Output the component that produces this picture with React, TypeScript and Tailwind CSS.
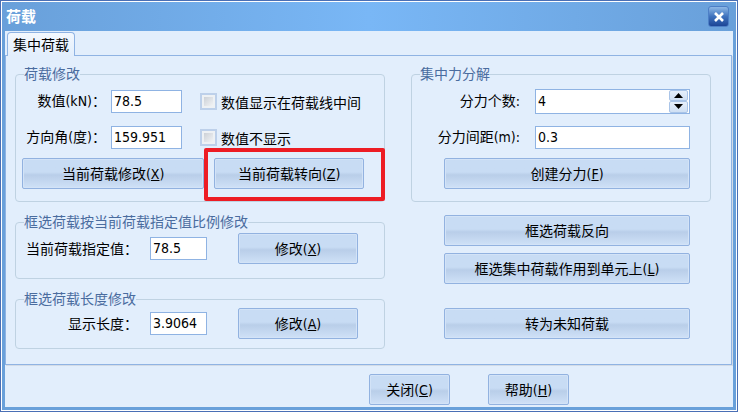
import { useState } from "react";
import type { ButtonHTMLAttributes, InputHTMLAttributes, ReactNode } from "react";
import { clsx } from "clsx";

export default function App() {
  return (
    <div className="min-h-screen bg-[#4a6fb5] p-px font-['DejaVu_Sans_Condensed','Noto_Sans_CJK_SC',sans-serif] text-sm leading-[18px] text-black">
      <div className="bg-white p-px">
        <div role="dialog" aria-labelledby="dialog-title" className="bg-[#69a0da] px-[3px] pb-[3px]">
          <TitleBar />
          <div className="bg-[#e2eefc]">
            <Tabs />
            <main className="mr-px flex gap-[26px] border border-[#8fb3e3] pt-[9px] pr-5 pb-[15px] pl-[9px] shadow-[1px_1px_0_#d3dbe6]">
              <div className="flex min-w-0 flex-[370] flex-col gap-[11px]">
                <LoadGroup />
                <ScaleGroup />
                <LengthGroup />
              </div>
              <div className="flex min-w-0 flex-[300] flex-col">
                <SplitGroup />
                <div className="mt-[13px] flex flex-col pr-[21px] pl-[33px]">
                  <Button>框选荷载反向</Button>
                  <Button className="mt-[7px]">框选集中荷载作用到单元上(<u>L</u>)</Button>
                  <Button className="mt-6">转为未知荷载</Button>
                </div>
              </div>
            </main>
            <footer className="flex justify-end gap-[38px] pt-[9px] pr-[164px] pb-[2px]">
              <Button className="w-[81px]">关闭(<u>C</u>)</Button>
              <Button className="w-[81px]">帮助(<u>H</u>)</Button>
            </footer>
          </div>
        </div>
      </div>
    </div>
  );
}

function TitleBar() {
  return (
    <header className="flex h-[29px] items-center justify-between bg-linear-to-r from-[#69a0da] via-[#79b7f6] to-[#69a0da] pr-1 pl-px">
      <h1 id="dialog-title" className="text-[15px] font-bold text-white">荷载</h1>
      <button
        type="button"
        aria-label="关闭窗口"
        className="flex size-[21px] items-center justify-center rounded-[3px] border border-[#4d7fc6] bg-linear-to-b from-[#8db8e6] via-[#3f72bd] to-[#1c4596]"
      >
        <svg viewBox="0 0 10 10" className="size-[10px]" fill="none" stroke="#fff" strokeWidth="2.6">
          <path d="M1 1l8 8M9 1l-8 8" />
        </svg>
      </button>
    </header>
  );
}

function Tabs() {
  return (
    <div role="tablist" className="-mb-px flex pt-px pl-[2px]">
      <button
        type="button"
        role="tab"
        aria-selected="true"
        className="relative h-6 w-[68px] rounded-t-[4px] border border-b-0 border-[#8fb3e3] bg-linear-to-b from-[#f3f8fe] to-[#e2eefc] text-center whitespace-nowrap"
      >
        集中荷载
      </button>
    </div>
  );
}

function LoadGroup() {
  return (
    <Group title="荷载修改" className="pr-5 pb-3 pl-[6px]">
      <Row>
        <Label htmlFor="value" className="w-[84px]">数值(kN)：</Label>
        <TextBox id="value" defaultValue="78.5" className="ml-[5px] w-[71px]" />
        <Check label="数值显示在荷载线中间" />
      </Row>
      <Row>
        <Label htmlFor="angle" className="w-[84px]">方向角(度)：</Label>
        <TextBox id="angle" defaultValue="159.951" className="ml-[5px] w-[71px]" />
        <Check label="数值不显示" />
      </Row>
      <div className="mt-[3px] flex gap-[10px]">
        <Button className="flex-[182]">当前荷载修改(<u>X</u>)</Button>
        <div className="relative flex flex-[151]">
          <Button className="flex-1">当前荷载转向(<u>Z</u>)</Button>
          <span className="pointer-events-none absolute -top-[10px] -right-[21px] -bottom-3 -left-[10px] rounded-[2px] border-4 border-[#ed1c24]" />
        </div>
      </div>
    </Group>
  );
}

function ScaleGroup() {
  return (
    <Group title="框选荷载按当前荷载指定值比例修改" className="pt-[2px] pr-[26px] pb-[14px] pl-[6px]">
      <div className="flex items-center">
        <Label htmlFor="target" className="w-[116px]">当前荷载指定值：</Label>
        <TextBox id="target" defaultValue="78.5" className="ml-3 w-[57px]" />
        <Button className="ml-[31px] flex-1">修改(<u>X</u>)</Button>
      </div>
    </Group>
  );
}

function LengthGroup() {
  return (
    <Group title="框选荷载长度修改" className="pr-[26px] pb-[9px] pl-[6px]">
      <div className="flex items-center">
        <Label htmlFor="length" className="w-[116px]">显示长度：</Label>
        <TextBox id="length" defaultValue="3.9064" className="ml-3 w-[57px]" />
        <Button className="ml-[31px] flex-1">修改(<u>A</u>)</Button>
      </div>
    </Group>
  );
}

function SplitGroup() {
  const [count, setCount] = useState(4);
  return (
    <Group title="集中力分解" className="pr-5 pb-3 pl-5">
      <Row>
        <Label htmlFor="count" className="w-[88px]">分力个数:</Label>
        <div className="ml-[15px] flex h-[25px] min-w-0 flex-1 border border-[#8fb3e3] bg-white">
          <input
            id="count"
            type="number"
            value={count}
            onChange={(e) => setCount(Number(e.target.value))}
            className="min-w-0 flex-1 appearance-none px-[2px] pb-px outline-none [-moz-appearance:textfield] [&::-webkit-inner-spin-button]:appearance-none"
          />
          <div className="mr-px flex w-[19px] flex-col">
            <SpinButton label="增加" points="0,5 9,5 4.5,0" onClick={() => setCount(count + 1)} />
            <SpinButton label="减少" points="0,0 9,0 4.5,5" onClick={() => setCount(Math.max(1, count - 1))} />
          </div>
        </div>
      </Row>
      <Row>
        <Label htmlFor="spacing" className="w-[88px]">分力间距(m):</Label>
        <TextBox id="spacing" defaultValue="0.3" className="ml-[15px] flex-1" />
      </Row>
      <div className="mt-[3px] flex pl-3">
        <Button className="flex-1">创建分力(<u>F</u>)</Button>
      </div>
    </Group>
  );
}

function Group({ title, className, children }: { title: string; className?: string; children: ReactNode }) {
  return (
    <fieldset className="min-w-0 rounded-[4px] border border-[#bfd2e2]">
      <legend className="ml-2 text-[#4a6c9f]">{title}</legend>
      <div className={className}>{children}</div>
    </fieldset>
  );
}

function Row({ children }: { children: ReactNode }) {
  return <div className="flex h-9 items-center">{children}</div>;
}

function Label({ htmlFor, className, children }: { htmlFor: string; className?: string; children: ReactNode }) {
  return (
    <label htmlFor={htmlFor} className={clsx("shrink-0 text-right whitespace-nowrap", className)}>
      {children}
    </label>
  );
}

function TextBox({ className, ...props }: InputHTMLAttributes<HTMLInputElement>) {
  return (
    <input
      type="text"
      className={clsx("h-[23px] min-w-0 border border-[#8fb3e3] bg-white px-[2px] pb-px outline-none", className)}
      {...props}
    />
  );
}

function Check({ label }: { label: string }) {
  return (
    <label className="ml-[18px] flex items-center gap-1 whitespace-nowrap">
      <input
        type="checkbox"
        className="size-[17px] appearance-none border-2 border-[#bdd0ea] bg-linear-to-br from-[#c4c9d0] to-[#fafbfc] bg-clip-padding shadow-[inset_0_0_0_2px_#eef1f4] checked:from-[#4a6fb5]"
      />
      <span className="pt-1">{label}</span>
    </label>
  );
}

function SpinButton({ label, points, onClick }: { label: string; points: string; onClick: () => void }) {
  return (
    <button
      type="button"
      aria-label={label}
      onClick={onClick}
      className="flex flex-1 items-center justify-center rounded-[2px] border border-[#a9c4e8] bg-linear-to-b from-[#e6effb] to-[#cfdff3]"
    >
      <svg viewBox="0 0 9 5" className="h-[5px] w-[9px]">
        <polygon points={points} />
      </svg>
    </button>
  );
}

function Button({ className, children, ...props }: ButtonHTMLAttributes<HTMLButtonElement>) {
  return (
    <button
      type="button"
      className={clsx(
        "h-[31px] rounded-[2px] border border-[#92b2e0] bg-linear-to-b from-[#c8dcf4] from-45% via-[#b9cee9] via-55% to-[#cfe1f7] text-center whitespace-nowrap shadow-[inset_0_0_0_1px_#d3e3f7]",
        className,
      )}
      {...props}
    >
      {children}
    </button>
  );
}
